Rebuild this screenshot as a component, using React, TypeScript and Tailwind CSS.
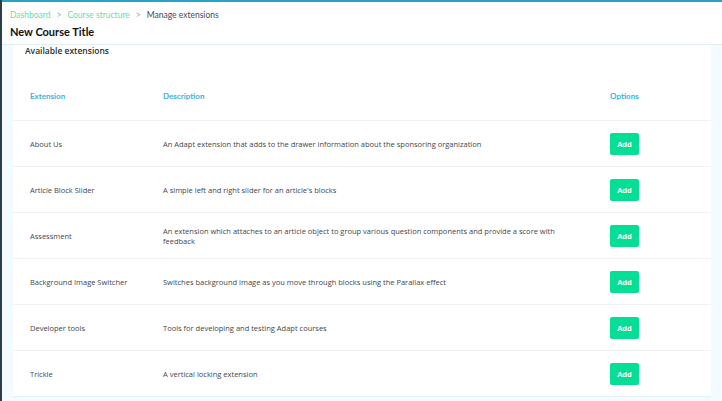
const extensions = [
  {
    name: "About Us",
    description:
      "An Adapt extension that adds to the drawer information about the sponsoring organization",
  },
  { name: "Article Block Slider", description: "A simple left and right slider for an article's blocks" },
  {
    name: "Assessment",
    description:
      "An extension which attaches to an article object to group various question components and provide a score with feedback",
  },
  {
    name: "Background Image Switcher",
    description: "Switches background image as you move through blocks using the Parallax effect",
  },
  { name: "Developer tools", description: "Tools for developing and testing Adapt courses" },
  { name: "Trickle", description: "A vertical locking extension" },
];

export default function App() {
  return (
    <div className="flex w-[722px] h-[401px] overflow-hidden bg-[#f3fbfe] font-['Open_Sans',sans-serif]">
      {/* left rail edge */}
      <div className="w-[2px] shrink-0 bg-[#2c3d4c]" />

      <div className="flex flex-1 flex-col">
        {/* header */}
        <header className="border-t-2 border-b border-t-[#24a3c9] border-b-[#e1eef5] bg-white px-[8px] pt-[7px] pb-[5px]">
          <nav className="flex items-center gap-[6px] font-['Lato',sans-serif] text-[8.5px] leading-[12px]">
            <span className="text-[#62dfa7]">Dashboard</span>
            <span className="text-[#9aa3ad]">&gt;</span>
            <span className="text-[#62dfa7]">Course structure</span>
            <span className="text-[#9aa3ad]">&gt;</span>
            <span className="text-[#3e4a5e]">Manage extensions</span>
          </nav>
          <h1 className="mt-[4px] font-['Lato',sans-serif] text-[11px] leading-[14px] font-bold text-[#111]">
            New Course Title
          </h1>
        </header>

        {/* content */}
        <main className="flex-1 px-[11px]">
          <section className="border-b border-[#e3f1f8] bg-white">
            <h2 className="px-[12px] pt-[0px] text-[8.5px] leading-[12px] font-semibold text-[#2b2f33]">
              Available extensions
            </h2>

            <div className="grid grid-cols-[133px_447px_1fr] px-[17px] pt-[33px] pb-[18px] font-['Lato',sans-serif] text-[8px] leading-[12px] font-bold text-[#3cb2dc]">
              <span>Extension</span>
              <span>Description</span>
              <span>Options</span>
            </div>

            {extensions.map((ext) => (
              <div
                key={ext.name}
                className="grid h-[46px] grid-cols-[133px_447px_1fr] items-center border-t border-[#eef2f4] px-[17px] text-[7.5px] leading-[10px] text-[#3f454d]"
              >
                <span>{ext.name}</span>
                <span className="max-w-[395px]">{ext.description}</span>
                <span>
                  <button className="h-[22px] w-[29px] rounded-[2px] bg-[#05df95] text-[7.5px] font-bold text-white">
                    Add
                  </button>
                </span>
              </div>
            ))}
          </section>
        </main>
      </div>
    </div>
  );
}
